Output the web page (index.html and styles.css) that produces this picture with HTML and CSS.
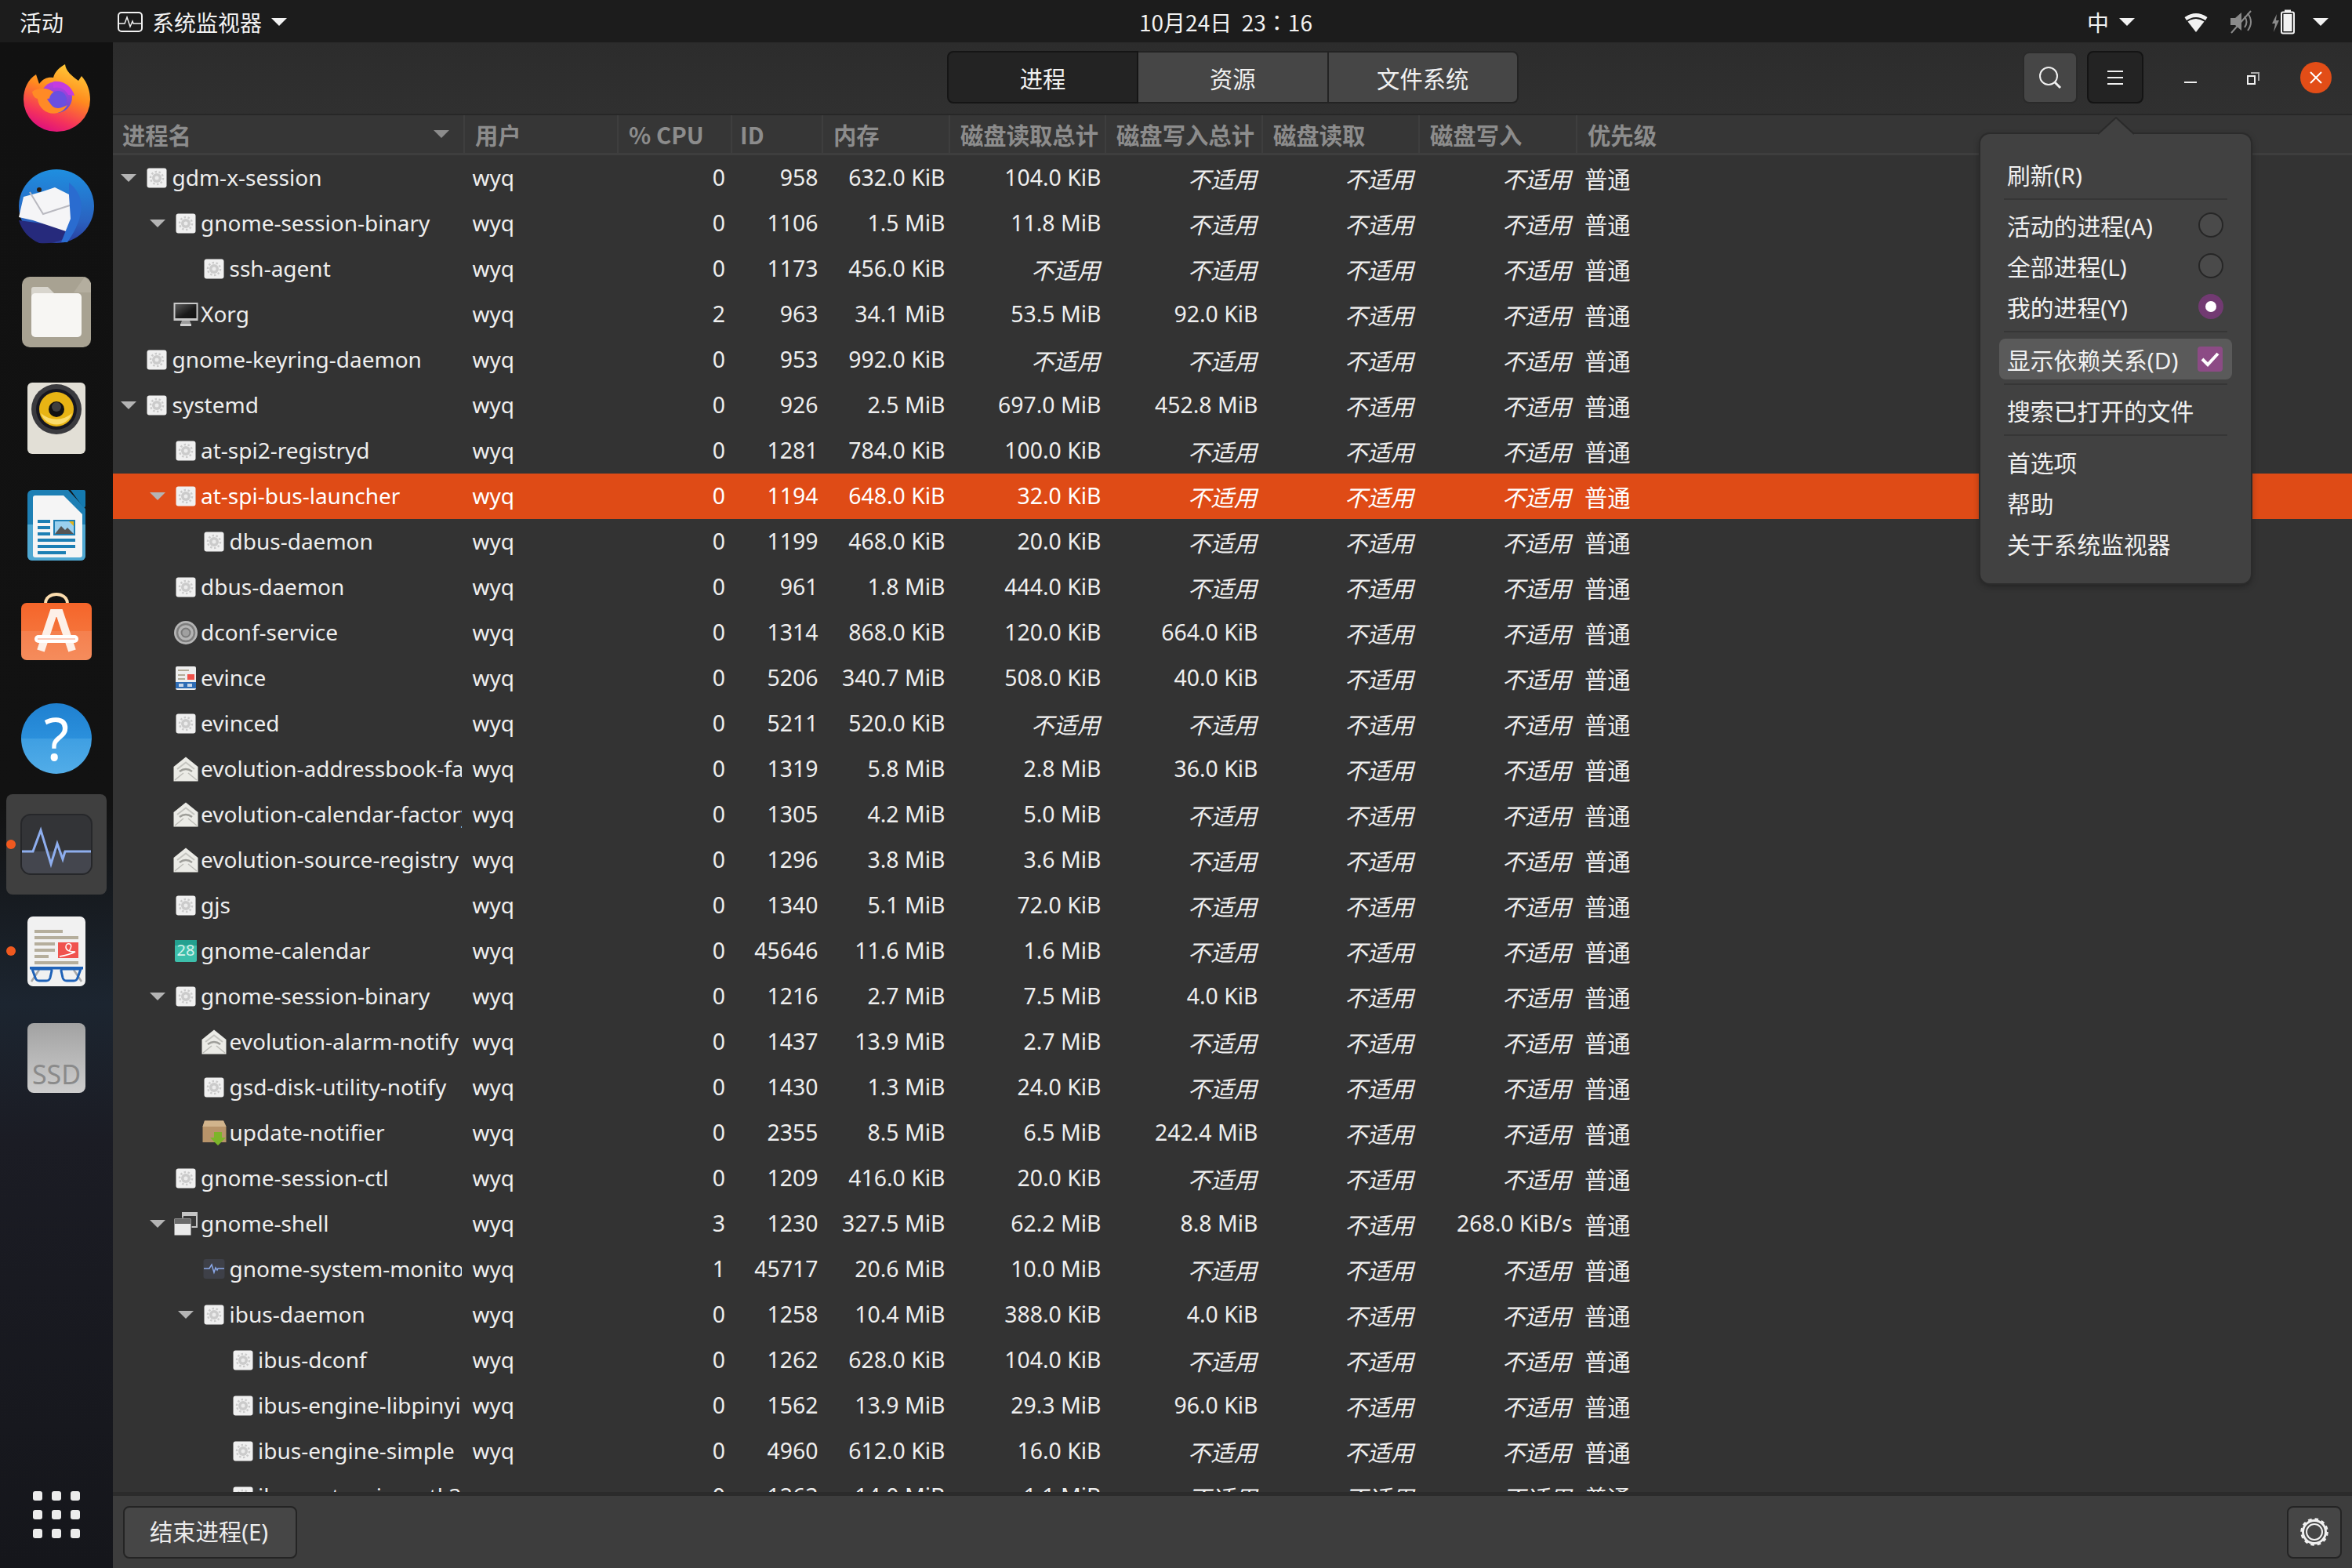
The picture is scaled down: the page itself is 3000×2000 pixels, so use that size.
FILE: index.html
```html
<!DOCTYPE html>
<html lang="zh-CN">
<head>
<meta charset="utf-8">
<title>系统监视器</title>
<link rel="stylesheet" href="styles.css">
</head>
<body>
<svg class="defs" width="0" height="0" aria-hidden="true">
  <defs>
    <linearGradient id="ffbody" x1="0.8" y1="0" x2="0.4" y2="1"><stop offset="0" stop-color="#ffd23a"/><stop offset="0.45" stop-color="#ff8a1e"/><stop offset="0.8" stop-color="#f5345a"/><stop offset="1" stop-color="#e0127c"/></linearGradient>
    <linearGradient id="ffcore" x1="0.5" y1="0" x2="0.5" y2="1"><stop offset="0" stop-color="#c13be0"/><stop offset="1" stop-color="#5a4fd0"/></linearGradient>
    <linearGradient id="tbbody" x1="0.5" y1="0" x2="0.5" y2="1"><stop offset="0" stop-color="#1f8fe0"/><stop offset="0.7" stop-color="#2a62c0"/><stop offset="1" stop-color="#2a3ea0"/></linearGradient>
    <linearGradient id="ssdg" x1="0" y1="0" x2="0" y2="1"><stop offset="0" stop-color="#a2a2a2"/><stop offset="1" stop-color="#cdcdcd"/></linearGradient>
    <linearGradient id="helpg" x1="0" y1="0" x2="0" y2="1"><stop offset="0" stop-color="#1f80d0"/><stop offset="0.5" stop-color="#2b90dc"/><stop offset="0.5" stop-color="#3f9fe2"/><stop offset="1" stop-color="#52ade8"/></linearGradient>
    <linearGradient id="softg" x1="0" y1="0" x2="0" y2="1"><stop offset="0" stop-color="#f5652a"/><stop offset="0.5" stop-color="#f5733a"/><stop offset="0.5" stop-color="#f5804e"/><stop offset="1" stop-color="#f58c5c"/></linearGradient>
    <linearGradient id="scr" x1="0" y1="0" x2="1" y2="1"><stop offset="0" stop-color="#5a5a5a"/><stop offset="0.6" stop-color="#1a1a1a"/><stop offset="1" stop-color="#111"/></linearGradient>
    <symbol id="gear" viewBox="-3.5 -3.5 32 32">
      <rect width="25" height="25" rx="3" fill="#f0f0f0"/>
      <circle cx="12.500" cy="12.500" r="6" fill="#cbcbcb"/>
      <circle cx="12.500" cy="12.500" r="8" fill="none" stroke="#cbcbcb" stroke-width="2.500" stroke-dasharray="2.500 2.500"/>
      <circle cx="12.500" cy="12.500" r="2.500" fill="#ececec"/>
    </symbol>
    <symbol id="mon" viewBox="0 0 32 32">
      <rect x="0.500" y="1" width="31" height="23" fill="#c9c9c9"/>
      <rect x="2.500" y="3" width="27" height="18" fill="url(#scr)"/>
      <path d="M11 24h10l2 5H9z" fill="#9c9c9c"/>
      <rect x="9" y="28" width="14" height="3" fill="#d0d0d0"/>
    </symbol>
    <symbol id="env" viewBox="0 0 32 32">
      <path d="M0.500 13 16 0.500 31.500 13v18.500h-31z" fill="#ebebe6"/>
      <path d="M5 16 16 7.500 27 16" fill="none" stroke="#c4c4bf" stroke-width="2"/>
      <path d="M8 19q8-6 16 0" fill="none" stroke="#9e9e99" stroke-width="2.500"/>
      <path d="M2 30 13 21M30 30 19 21" stroke="#bdbdb8" stroke-width="1.500"/>
    </symbol>
    <symbol id="cal" viewBox="-2 -2 32 32">
      <rect width="28" height="28" rx="2" fill="#3dbfab"/>
      <rect width="28" height="7" fill="#23a08f"/>
      <text x="14" y="20" class="caltext">28</text>
    </symbol>
    <symbol id="pkg" viewBox="0 0 32 32">
      <path d="M4 0.500h24L31.500 8v20h-30V8z" fill="#b8946a"/>
      <path d="M4 0.500h24L31.500 8h-30z" fill="#d1b48c"/>
      <path d="M16 15h10v7h5l-10 10-10-10h5z" fill="#7cb52a"/>
    </symbol>
    <symbol id="win" viewBox="0 0 32 32">
      <rect x="11" y="1" width="20" height="20" fill="#c5c5c5"/>
      <rect x="13" y="6" width="16" height="13" fill="#3a3a3a"/>
      <rect x="1" y="9" width="22" height="22" fill="#eaeaea" stroke="#333"/>
      <rect x="2" y="10" width="20" height="6" fill="#6a6a6a"/>
    </symbol>
    <symbol id="conf" viewBox="0 0 32 32">
      <circle cx="16" cy="16" r="15" fill="#b5b5b5"/>
      <circle cx="16" cy="16" r="11" fill="none" stroke="#7e7e7e" stroke-width="2.500"/>
      <circle cx="16" cy="16" r="5.500" fill="#a0a0a0" stroke="#7a7a7a" stroke-width="2"/>
    </symbol>
    <symbol id="doc" viewBox="-3 -1 32 32">
      <rect width="26" height="30" rx="2" fill="#eeeeee"/>
      <path d="M3 5h14M3 11h9M3 16h9" stroke="#b3ab98" stroke-width="2"/>
      <rect x="15" y="10" width="9" height="7" fill="#f0524a"/>
      <rect y="20" width="26" height="8" fill="#2d6cb5"/>
      <path d="M4 22h6v4H4zM15 22h6v4h-6z" fill="#c5d5e8"/>
    </symbol>
    <symbol id="sysm" viewBox="-2 -2 32 32">
      <rect x="0.500" y="1" width="27" height="25" rx="3" fill="#3e4048"/>
      <path d="M1 13h7l3-5 3 10 2-6 2 3 1-2h8" fill="none" stroke="#8aa8e8" stroke-width="1.500"/>
    </symbol>
  </defs>
</svg>

<div class="desk">
  <header class="panel">
    <span class="panel-txt activities">活动</span>
    <svg class="appglyph" viewBox="0 0 32 26"><rect x="1" y="1" width="30" height="24" rx="4" fill="none" stroke="#f2f2f2" stroke-width="2"/><path d="M1 15h8l3-8 4 12 3-7 1 3h11" fill="none" stroke="#f2f2f2" stroke-width="1.500"/></svg>
    <span class="panel-txt appname">系统监视器</span>
    <i class="caret app-caret"></i>
    <span class="panel-txt clock">10月24日&nbsp;&nbsp;23<span class="colon" lang="ja">：</span>16</span>
    <div class="tray">
      <span class="panel-txt ime">中</span>
      <i class="caret ime-caret"></i>
      <svg class="wifi" viewBox="0 0 30 26"><path d="M0.500 7Q15-3 29.500 7l-2.500 4Q15 3 3 11z" fill="#f2f2f2"/><path d="M4.500 12.500Q15 5.500 25.500 12.500L15 26z" fill="#f2f2f2"/></svg>
      <svg class="vol" viewBox="0 0 28 30"><path d="M0 10h6l8-7v23l-8-7H0z" fill="#8a8a8a"/><path d="M18 8q5 7 0 14M22 4q8 11 0 22" fill="none" stroke="#8a8a8a" stroke-width="2"/><path d="M1 29 26 1" stroke="#8a8a8a" stroke-width="2"/></svg>
      <svg class="bat" viewBox="0 0 30 32"><path d="M7 6 1 18h4l-2 11 7-15H6z" fill="#8a8a8a"/><rect x="13" y="3.500" width="16" height="27" rx="2" fill="none" stroke="#f2f2f2" stroke-width="2"/><rect x="17" y="0.500" width="8" height="3" fill="#f2f2f2"/><rect x="15.500" y="6" width="11" height="22" fill="#f2f2f2"/></svg>
      <i class="caret tray-caret"></i>
    </div>
  </header>

  <div class="main">
    <nav class="dock">
      <div class="slot">
        <svg viewBox="0 0 128 128"><path d="M22 66c0-14 6-26 16-32l4 12c5-7 11-9 18-8 2-8 8-13 15-17 1 9 9 15 17 21l4-6c8 9 11 20 11 30a42.500 41 0 0 1-85 0z" fill="url(#ffbody)"/><circle cx="64" cy="63" r="20" fill="url(#ffcore)"/><path d="M60 43c12-2 24 6 27 18l-8-1c-4-8-11-11-19-9z" fill="#c43be0"/><path d="M33 56c8-6 19-5 27 0 2 6-3 9-8 9 5 10 15 14 26 8-10 18-36 12-38-8-4-1-6-4-7-9z" fill="#ff8a26"/><circle cx="66" cy="66" r="11" fill="#6a4fe0"/></svg>
      </div>
      <div class="slot">
        <svg viewBox="0 0 128 128"><ellipse cx="64" cy="66" rx="48" ry="47" fill="url(#tbbody)"/><path d="M16 84c4 14 14 24 26 29 22 2 36-6 44-16L60 90z" fill="#262a7c"/><path d="M44 48 62 42 82 52v48l-48-16-18-4 6-26z" fill="#f5f5f7"/><path d="M30 48 47 76 81 65" fill="none" stroke="#b9b9c0" stroke-width="2"/><path d="M80 36c10 8 18 20 15 38-2 14-10 28-17 38l-8 0 12-30-2-30z" fill="#2a6cd0"/><circle cx="42" cy="45" r="3" fill="#2b1c10"/></svg>
      </div>
      <div class="slot">
        <svg viewBox="0 0 128 128"><rect x="20" y="20" width="88" height="90" rx="10" fill="#a8a292"/><path d="M100 20l-14 20h22V28z" fill="#b4ae9f"/><path d="M32 36a3 3 0 0 1 3-3h18l8 8v10H32z" fill="#d8d5cd"/><rect x="32" y="41" width="64" height="56" rx="5" fill="#f7f6f3"/></svg>
      </div>
      <div class="slot">
        <svg viewBox="0 0 128 128"><rect x="27" y="19" width="74" height="91" rx="6" fill="#e2dfd6"/><circle cx="64" cy="53" r="32" fill="#3a3a3e"/><circle cx="64" cy="53" r="26" fill="#17171f"/><circle cx="64" cy="53" r="22" fill="#e8b414"/><path d="M44 58a21 21 0 0 0 40 0 30 30 0 0 1-40 0z" fill="#fbdc6c"/><circle cx="64" cy="53" r="10" fill="#111"/><circle cx="64" cy="50" r="6" fill="#3e3e3e"/></svg>
      </div>
      <div class="slot">
        <svg viewBox="0 0 128 128"><path d="M33 20h46l22 24v60a6 6 0 0 1-6 6H33a6 6 0 0 1-6-6V26a6 6 0 0 1 6-6z" fill="#1d7fb4"/><path d="M27 64h74v40a6 6 0 0 1-6 6H33a6 6 0 0 1-6-6z" fill="#4fa8d2"/><path d="M82 20h17a2 2 0 0 1 2 2v18a2 2 0 0 1-3 2z" fill="#147ab0"/><path d="M37 27h36l24 24v52a3 3 0 0 1-3 3H37a3 3 0 0 1-3-3V30a3 3 0 0 1 3-3z" fill="#f5f5f5"/><path d="M40 58h16v4H40zM40 66h16v4H40zM40 74h16v4H40zM40 82h48v4H40zM40 90h48v4H40zM40 98h36v4H40z" fill="#1d7fb4"/><rect x="60" y="58" width="28" height="20" fill="#1d7fb4"/><rect x="62" y="60" width="24" height="16" fill="#9ad0ee"/><path d="M62 76l8-10 5 5 3-3 8 8z" fill="#555"/><path d="M80 60h6v6z" fill="#e6b416"/></svg>
      </div>
      <div class="slot">
        <svg viewBox="0 0 128 128"><path d="M50 29c0-16 28-16 28 0" fill="none" stroke="#fbdcae" stroke-width="4"/><rect x="19" y="28" width="90" height="73" rx="7" fill="url(#softg)"/><path d="M44 89 60 41h8l16 48" fill="none" stroke="#fdf0e8" stroke-width="10"/><rect x="36" y="69" width="56" height="10" rx="5" fill="#fff"/><rect x="40" y="73" width="48" height="2" fill="#fbcdbd"/></svg>
      </div>
      <div class="slot">
        <svg viewBox="0 0 128 128"><circle cx="64" cy="65" r="45" fill="url(#helpg)"/><text x="64" y="93" class="helptext">?</text></svg>
      </div>
      <div class="slot active">
        <i class="dot"></i>
        <svg viewBox="0 0 128 128"><rect x="19" y="26" width="90" height="76" rx="12" fill="#333437" stroke="#26272a" stroke-width="2"/><path d="M20 73h88v17a11 11 0 0 1-11 11H31a11 11 0 0 1-11-11z" fill="#44464e"/><path d="M20 73h14l10-27 13 43 8-26 7 20 3-10h33" fill="none" stroke="#8eaeee" stroke-width="3"/></svg>
      </div>
      <div class="slot">
        <i class="dot"></i>
        <svg viewBox="0 0 128 128"><rect x="27" y="20" width="74" height="89" rx="7" fill="#f1f1f1"/><path d="M36 37h36v4H36zM36 45h56v4H36zM36 53h26v4H36zM36 61h26v4H36zM36 69h18v4H36zM36 77h56v4H36z" fill="#b5ae9c"/><rect x="66" y="53" width="26" height="20" fill="#f0534e"/><path d="M68 71q12-2 20-6-12 0-12-6 0-5 5-4 4 2-1 9" fill="none" stroke="#fff" stroke-width="1.500"/><path d="M42 88 32 103M86 88l10 15" stroke="#a8a8a8" stroke-width="2.500"/><path d="M33 87h23q2 0 2 2l-2 9q-1 4-5 4H42q-4 0-5-4zM95 87H72q-2 0-2 2l2 9q1 4 5 4h9q4 0 5-4z" fill="none" stroke="#1f62b8" stroke-width="3"/><path d="M30 84h68v3.500H30z" fill="#1f62b8"/></svg>
      </div>
      <div class="slot">
        <svg viewBox="0 0 128 128"><rect x="27" y="20" width="74" height="89" rx="8" fill="url(#ssdg)"/><text x="64" y="98" class="ssdtext">SSD</text></svg>
      </div>
      <div class="grid9"><i></i><i></i><i></i><i></i><i></i><i></i><i></i><i></i><i></i></div>
    </nav>

    <section class="win">
      <div class="hdr">
        <div class="tabs">
          <button class="tab on">进程</button>
          <button class="tab">资源</button>
          <button class="tab">文件系统</button>
        </div>
        <div class="ctrls">
          <button class="hbtn search"><svg viewBox="0 0 32 32"><circle cx="14" cy="14" r="11" fill="none" stroke="#f0f0f0" stroke-width="2"/><path d="M22 22l7 7" stroke="#f0f0f0" stroke-width="3"/></svg></button>
          <button class="hbtn burger"><svg viewBox="0 0 20 20"><path d="M0 2h20M0 10h20M0 18h20" stroke="#f0f0f0" stroke-width="2"/></svg></button>
          <svg class="wmin" viewBox="0 0 16 2"><rect width="16" height="2" fill="#f0f0f0"/></svg>
          <svg class="wmax" viewBox="0 0 16 16"><path d="M5 0h11v11h-2V2H5z" fill="#a8a8a8"/><rect x="1" y="5" width="9" height="10" fill="none" stroke="#f0f0f0" stroke-width="2"/></svg>
          <div class="wclose"><svg viewBox="0 0 16 16"><path d="M1 1l14 14M15 1 1 15" stroke="#fff" stroke-width="2"/></svg></div>
        </div>
      </div>

      <div class="cols">
        <div class="col first">进程名<i class="sort"></i></div>
        <div class="col">用户</div>
        <div class="col">% CPU</div>
        <div class="col col-id">ID</div>
        <div class="col">内存</div>
        <div class="col">磁盘读取总计</div>
        <div class="col">磁盘写入总计</div>
        <div class="col">磁盘读取</div>
        <div class="col">磁盘写入</div>
        <div class="col">优先级</div>
      </div>

      <div class="rows">
        <div class="row"><div class="name l0"><i class="tw o"></i><svg class="ic"><use href="#gear"/></svg><span class="nm">gdm-x-session</span></div><div class="usr">wyq</div><div class="num">0</div><div class="num">958</div><div class="num">632.0 KiB</div><div class="num">104.0 KiB</div><div class="na">不适用</div><div class="na">不适用</div><div class="na">不适用</div><div class="pri">普通</div></div>
        <div class="row"><div class="name l1"><i class="tw o"></i><svg class="ic"><use href="#gear"/></svg><span class="nm">gnome-session-binary</span></div><div class="usr">wyq</div><div class="num">0</div><div class="num">1106</div><div class="num">1.5 MiB</div><div class="num">11.8 MiB</div><div class="na">不适用</div><div class="na">不适用</div><div class="na">不适用</div><div class="pri">普通</div></div>
        <div class="row"><div class="name l2"><i class="tw"></i><svg class="ic"><use href="#gear"/></svg><span class="nm">ssh-agent</span></div><div class="usr">wyq</div><div class="num">0</div><div class="num">1173</div><div class="num">456.0 KiB</div><div class="na">不适用</div><div class="na">不适用</div><div class="na">不适用</div><div class="na">不适用</div><div class="pri">普通</div></div>
        <div class="row"><div class="name l1"><i class="tw"></i><svg class="ic"><use href="#mon"/></svg><span class="nm">Xorg</span></div><div class="usr">wyq</div><div class="num">2</div><div class="num">963</div><div class="num">34.1 MiB</div><div class="num">53.5 MiB</div><div class="num">92.0 KiB</div><div class="na">不适用</div><div class="na">不适用</div><div class="pri">普通</div></div>
        <div class="row"><div class="name l0"><i class="tw"></i><svg class="ic"><use href="#gear"/></svg><span class="nm">gnome-keyring-daemon</span></div><div class="usr">wyq</div><div class="num">0</div><div class="num">953</div><div class="num">992.0 KiB</div><div class="na">不适用</div><div class="na">不适用</div><div class="na">不适用</div><div class="na">不适用</div><div class="pri">普通</div></div>
        <div class="row"><div class="name l0"><i class="tw o"></i><svg class="ic"><use href="#gear"/></svg><span class="nm">systemd</span></div><div class="usr">wyq</div><div class="num">0</div><div class="num">926</div><div class="num">2.5 MiB</div><div class="num">697.0 MiB</div><div class="num">452.8 MiB</div><div class="na">不适用</div><div class="na">不适用</div><div class="pri">普通</div></div>
        <div class="row"><div class="name l1"><i class="tw"></i><svg class="ic"><use href="#gear"/></svg><span class="nm">at-spi2-registryd</span></div><div class="usr">wyq</div><div class="num">0</div><div class="num">1281</div><div class="num">784.0 KiB</div><div class="num">100.0 KiB</div><div class="na">不适用</div><div class="na">不适用</div><div class="na">不适用</div><div class="pri">普通</div></div>
        <div class="row sel"><div class="name l1"><i class="tw o"></i><svg class="ic"><use href="#gear"/></svg><span class="nm">at-spi-bus-launcher</span></div><div class="usr">wyq</div><div class="num">0</div><div class="num">1194</div><div class="num">648.0 KiB</div><div class="num">32.0 KiB</div><div class="na">不适用</div><div class="na">不适用</div><div class="na">不适用</div><div class="pri">普通</div></div>
        <div class="row"><div class="name l2"><i class="tw"></i><svg class="ic"><use href="#gear"/></svg><span class="nm">dbus-daemon</span></div><div class="usr">wyq</div><div class="num">0</div><div class="num">1199</div><div class="num">468.0 KiB</div><div class="num">20.0 KiB</div><div class="na">不适用</div><div class="na">不适用</div><div class="na">不适用</div><div class="pri">普通</div></div>
        <div class="row"><div class="name l1"><i class="tw"></i><svg class="ic"><use href="#gear"/></svg><span class="nm">dbus-daemon</span></div><div class="usr">wyq</div><div class="num">0</div><div class="num">961</div><div class="num">1.8 MiB</div><div class="num">444.0 KiB</div><div class="na">不适用</div><div class="na">不适用</div><div class="na">不适用</div><div class="pri">普通</div></div>
        <div class="row"><div class="name l1"><i class="tw"></i><svg class="ic"><use href="#conf"/></svg><span class="nm">dconf-service</span></div><div class="usr">wyq</div><div class="num">0</div><div class="num">1314</div><div class="num">868.0 KiB</div><div class="num">120.0 KiB</div><div class="num">664.0 KiB</div><div class="na">不适用</div><div class="na">不适用</div><div class="pri">普通</div></div>
        <div class="row"><div class="name l1"><i class="tw"></i><svg class="ic"><use href="#doc"/></svg><span class="nm">evince</span></div><div class="usr">wyq</div><div class="num">0</div><div class="num">5206</div><div class="num">340.7 MiB</div><div class="num">508.0 KiB</div><div class="num">40.0 KiB</div><div class="na">不适用</div><div class="na">不适用</div><div class="pri">普通</div></div>
        <div class="row"><div class="name l1"><i class="tw"></i><svg class="ic"><use href="#gear"/></svg><span class="nm">evinced</span></div><div class="usr">wyq</div><div class="num">0</div><div class="num">5211</div><div class="num">520.0 KiB</div><div class="na">不适用</div><div class="na">不适用</div><div class="na">不适用</div><div class="na">不适用</div><div class="pri">普通</div></div>
        <div class="row"><div class="name l1"><i class="tw"></i><svg class="ic"><use href="#env"/></svg><span class="nm">evolution-addressbook-factory</span></div><div class="usr">wyq</div><div class="num">0</div><div class="num">1319</div><div class="num">5.8 MiB</div><div class="num">2.8 MiB</div><div class="num">36.0 KiB</div><div class="na">不适用</div><div class="na">不适用</div><div class="pri">普通</div></div>
        <div class="row"><div class="name l1"><i class="tw"></i><svg class="ic"><use href="#env"/></svg><span class="nm">evolution-calendar-factory</span></div><div class="usr">wyq</div><div class="num">0</div><div class="num">1305</div><div class="num">4.2 MiB</div><div class="num">5.0 MiB</div><div class="na">不适用</div><div class="na">不适用</div><div class="na">不适用</div><div class="pri">普通</div></div>
        <div class="row"><div class="name l1"><i class="tw"></i><svg class="ic"><use href="#env"/></svg><span class="nm">evolution-source-registry</span></div><div class="usr">wyq</div><div class="num">0</div><div class="num">1296</div><div class="num">3.8 MiB</div><div class="num">3.6 MiB</div><div class="na">不适用</div><div class="na">不适用</div><div class="na">不适用</div><div class="pri">普通</div></div>
        <div class="row"><div class="name l1"><i class="tw"></i><svg class="ic"><use href="#gear"/></svg><span class="nm">gjs</span></div><div class="usr">wyq</div><div class="num">0</div><div class="num">1340</div><div class="num">5.1 MiB</div><div class="num">72.0 KiB</div><div class="na">不适用</div><div class="na">不适用</div><div class="na">不适用</div><div class="pri">普通</div></div>
        <div class="row"><div class="name l1"><i class="tw"></i><svg class="ic"><use href="#cal"/></svg><span class="nm">gnome-calendar</span></div><div class="usr">wyq</div><div class="num">0</div><div class="num">45646</div><div class="num">11.6 MiB</div><div class="num">1.6 MiB</div><div class="na">不适用</div><div class="na">不适用</div><div class="na">不适用</div><div class="pri">普通</div></div>
        <div class="row"><div class="name l1"><i class="tw o"></i><svg class="ic"><use href="#gear"/></svg><span class="nm">gnome-session-binary</span></div><div class="usr">wyq</div><div class="num">0</div><div class="num">1216</div><div class="num">2.7 MiB</div><div class="num">7.5 MiB</div><div class="num">4.0 KiB</div><div class="na">不适用</div><div class="na">不适用</div><div class="pri">普通</div></div>
        <div class="row"><div class="name l2"><i class="tw"></i><svg class="ic"><use href="#env"/></svg><span class="nm">evolution-alarm-notify</span></div><div class="usr">wyq</div><div class="num">0</div><div class="num">1437</div><div class="num">13.9 MiB</div><div class="num">2.7 MiB</div><div class="na">不适用</div><div class="na">不适用</div><div class="na">不适用</div><div class="pri">普通</div></div>
        <div class="row"><div class="name l2"><i class="tw"></i><svg class="ic"><use href="#gear"/></svg><span class="nm">gsd-disk-utility-notify</span></div><div class="usr">wyq</div><div class="num">0</div><div class="num">1430</div><div class="num">1.3 MiB</div><div class="num">24.0 KiB</div><div class="na">不适用</div><div class="na">不适用</div><div class="na">不适用</div><div class="pri">普通</div></div>
        <div class="row"><div class="name l2"><i class="tw"></i><svg class="ic"><use href="#pkg"/></svg><span class="nm">update-notifier</span></div><div class="usr">wyq</div><div class="num">0</div><div class="num">2355</div><div class="num">8.5 MiB</div><div class="num">6.5 MiB</div><div class="num">242.4 MiB</div><div class="na">不适用</div><div class="na">不适用</div><div class="pri">普通</div></div>
        <div class="row"><div class="name l1"><i class="tw"></i><svg class="ic"><use href="#gear"/></svg><span class="nm">gnome-session-ctl</span></div><div class="usr">wyq</div><div class="num">0</div><div class="num">1209</div><div class="num">416.0 KiB</div><div class="num">20.0 KiB</div><div class="na">不适用</div><div class="na">不适用</div><div class="na">不适用</div><div class="pri">普通</div></div>
        <div class="row"><div class="name l1"><i class="tw o"></i><svg class="ic"><use href="#win"/></svg><span class="nm">gnome-shell</span></div><div class="usr">wyq</div><div class="num">3</div><div class="num">1230</div><div class="num">327.5 MiB</div><div class="num">62.2 MiB</div><div class="num">8.8 MiB</div><div class="na">不适用</div><div class="num">268.0 KiB/s</div><div class="pri">普通</div></div>
        <div class="row"><div class="name l2"><i class="tw"></i><svg class="ic"><use href="#sysm"/></svg><span class="nm">gnome-system-monitor</span></div><div class="usr">wyq</div><div class="num">1</div><div class="num">45717</div><div class="num">20.6 MiB</div><div class="num">10.0 MiB</div><div class="na">不适用</div><div class="na">不适用</div><div class="na">不适用</div><div class="pri">普通</div></div>
        <div class="row"><div class="name l2"><i class="tw o"></i><svg class="ic"><use href="#gear"/></svg><span class="nm">ibus-daemon</span></div><div class="usr">wyq</div><div class="num">0</div><div class="num">1258</div><div class="num">10.4 MiB</div><div class="num">388.0 KiB</div><div class="num">4.0 KiB</div><div class="na">不适用</div><div class="na">不适用</div><div class="pri">普通</div></div>
        <div class="row"><div class="name l3"><i class="tw"></i><svg class="ic"><use href="#gear"/></svg><span class="nm">ibus-dconf</span></div><div class="usr">wyq</div><div class="num">0</div><div class="num">1262</div><div class="num">628.0 KiB</div><div class="num">104.0 KiB</div><div class="na">不适用</div><div class="na">不适用</div><div class="na">不适用</div><div class="pri">普通</div></div>
        <div class="row"><div class="name l3"><i class="tw"></i><svg class="ic"><use href="#gear"/></svg><span class="nm">ibus-engine-libpinyin</span></div><div class="usr">wyq</div><div class="num">0</div><div class="num">1562</div><div class="num">13.9 MiB</div><div class="num">29.3 MiB</div><div class="num">96.0 KiB</div><div class="na">不适用</div><div class="na">不适用</div><div class="pri">普通</div></div>
        <div class="row"><div class="name l3"><i class="tw"></i><svg class="ic"><use href="#gear"/></svg><span class="nm">ibus-engine-simple</span></div><div class="usr">wyq</div><div class="num">0</div><div class="num">4960</div><div class="num">612.0 KiB</div><div class="num">16.0 KiB</div><div class="na">不适用</div><div class="na">不适用</div><div class="na">不适用</div><div class="pri">普通</div></div>
        <div class="row"><div class="name l3"><i class="tw"></i><svg class="ic"><use href="#gear"/></svg><span class="nm">ibus-extension-gtk3</span></div><div class="usr">wyq</div><div class="num">0</div><div class="num">1263</div><div class="num">14.0 MiB</div><div class="num">1.1 MiB</div><div class="na">不适用</div><div class="na">不适用</div><div class="na">不适用</div><div class="pri">普通</div></div>
      </div>

      <div class="foot">
        <button class="endbtn">结束进程(E)</button>
        <button class="gearbtn"><svg viewBox="0 0 36 36"><circle cx="18" cy="18" r="14.500" fill="none" stroke="#f0f0f0" stroke-width="3"/><circle cx="18" cy="18" r="16" fill="none" stroke="#f0f0f0" stroke-width="3.500" stroke-dasharray="4.500 3.880"/><circle cx="18" cy="18" r="10" fill="none" stroke="#f0f0f0" stroke-width="2"/></svg></button>
      </div>

      <div class="pop">
        <svg class="pop-tip" viewBox="0 0 46 24"><path d="M0 23 23 1l23 22z" fill="#414141"/><path d="M0 22 23 1l23 21" fill="none" stroke="#2a2a2a" stroke-width="2"/></svg>
        <div class="mi">刷新(R)</div>
        <div class="sep"></div>
        <div class="mi">活动的进程(A)<i class="radio"></i></div>
        <div class="mi">全部进程(L)<i class="radio"></i></div>
        <div class="mi">我的进程(Y)<i class="radio on"></i></div>
        <div class="sep sep-wide"></div>
        <div class="mi hov">显示依赖关系(D)<svg class="check" viewBox="0 0 32 32"><rect width="32" height="32" rx="4" fill="#8c4b85"/><path d="M6 16l7 7L26 9" fill="none" stroke="#fff" stroke-width="4"/></svg></div>
        <div class="sep"></div>
        <div class="mi">搜索已打开的文件</div>
        <div class="sep"></div>
        <div class="mi first-low">首选项</div>
        <div class="mi">帮助</div>
        <div class="mi">关于系统监视器</div>
      </div>
    </section>
  </div>
</div>
</body>
</html>
```
FILE: styles.css
```css
* { box-sizing: border-box; }
html, body { margin: 0; padding: 0; }
body {
  width: 3000px;
  height: 2000px;
  overflow: hidden;
  background: #333;
  color: #eeeeee;
  font-family: "Noto Sans", "Noto Sans CJK SC", sans-serif;
}
.defs { position: absolute; }
i { display: block; font-style: normal; }
button { font: inherit; color: inherit; padding: 0; }
svg { display: block; }

.desk { display: flex; flex-direction: column; height: 2000px; }

/* top panel */
.panel {
  height: 54px;
  flex: none;
  display: flex;
  align-items: center;
  background: #1c1c1c;
  padding-left: 25px;
  padding-top: 2px;
}
.panel-txt { font-size: 28px; color: #f2f2f2; font-family: "Noto Sans CJK SC", sans-serif; white-space: nowrap; }
.appglyph { width: 32px; height: 26px; margin-left: 69px; }
.appname { margin-left: 12px; }
.caret { width: 0; height: 0; border-left: 10px solid transparent; border-right: 10px solid transparent; border-top: 10px solid #f2f2f2; margin-left: 11px; }
.app-caret { margin-left: 12px; }
.clock { margin-left: 1087px; }
.colon { font-family: "Noto Sans CJK JP", sans-serif; }
.tray { margin-left: auto; display: flex; align-items: center; padding-right: 30px; }
.ime-caret { margin-left: 13px; }
.wifi { width: 30px; height: 26px; margin-left: 63px; }
.vol { width: 28px; height: 30px; margin-left: 29px; }
.bat { width: 30px; height: 32px; margin-left: 24px; }
.tray-caret { margin-left: 23px; }

/* main */
.main { flex: 1; display: flex; min-height: 0; }
.dock {
  width: 144px;
  flex: none;
  display: flex;
  flex-direction: column;
  gap: 8px;
  padding: 7px 8px 38px;
  background: linear-gradient(180deg, #111111 0%, #121212 50%, #1c2530 63%, #1b1c24 72%, #15161b 100%);
}
.slot { position: relative; width: 128px; height: 128px; flex: none; border-radius: 8px; }
.slot svg { width: 128px; height: 128px; }
.slot.active { background: #3f3f3f; }
.dot { position: absolute; left: 0; top: 58px; width: 12px; height: 12px; border-radius: 50%; background: #f0591f; }
.grid9 {
  margin-top: auto;
  align-self: center;
  display: grid;
  grid-template-columns: repeat(3, 12px);
  grid-auto-rows: 12px;
  column-gap: 12px;
  row-gap: 12px;
}
.grid9 i { background: #ececec; border-radius: 3px; }

.win { position: relative; flex: 1; min-width: 0; display: flex; flex-direction: column; background: #333333; }

/* header bar */
.hdr {
  height: 93px;
  flex: none;
  display: flex;
  align-items: center;
  padding-left: 1064px;
  padding-bottom: 2px;
  background: linear-gradient(180deg, #2c2c2c, #303030);
  border-bottom: 2px solid #272727;
}
.tabs { display: flex; width: 729px; height: 67px; }
.tab {
  flex: 1;
  background: #464646;
  border: 2px solid #232323;
  border-left-width: 0;
  font-size: 29.33px;
  font-family: "Noto Sans CJK SC", sans-serif;
  color: #f0f0f0;
}
.tab:last-child { border-radius: 0 8px 8px 0; }
.tab.on { flex: none; width: 244px; background: #232323; border-color: #151515; border-left-width: 2px; border-radius: 8px 0 0 8px; }
.ctrls { margin-left: auto; display: flex; align-items: center; padding-right: 26px; }
.hbtn { display: flex; align-items: center; justify-content: center; border-radius: 8px; }
.search { width: 70px; height: 66px; background: #464646; border: 2px solid #2a2a2a; }
.search svg { width: 32px; height: 32px; }
.burger { width: 72px; height: 67px; background: #232323; border: 2px solid #141414; margin-left: 12px; }
.burger svg { width: 20px; height: 20px; }
.wmin { width: 16px; height: 2px; margin-left: 52px; margin-top: 12px; }
.wmax { width: 16px; height: 16px; margin-left: 64px; margin-top: 2px; }
.wclose { width: 40px; height: 40px; margin-left: 52px; border-radius: 50%; background: #e24d17; display: flex; align-items: center; justify-content: center; }
.wclose svg { width: 16px; height: 16px; }

/* columns */
.cols, .row {
  display: grid;
  grid-template-columns: 449px 196px 145px 116px 162px 199px 200px 200px 201px 1fr;
}
.cols {
  height: 51px;
  flex: none;
  background: #363636;
  border-bottom: 3px solid #3e3e3e;
}
.col {
  display: flex;
  align-items: center;
  padding-left: 13px;
  border-right: 2px solid #3e3e3e;
  font-size: 29.33px;
  font-weight: 700;
  color: #8c8c8c;
  font-family: "Noto Sans CJK SC", sans-serif;
  white-space: nowrap;
  overflow: hidden;
}
.col:last-child { border-right: 0; }
.col.first { padding-left: 12px; }
.col-id { padding-left: 10px; }
.sort { margin-left: auto; margin-right: 18px; width: 0; height: 0; border-left: 10px solid transparent; border-right: 10px solid transparent; border-top: 10px solid #8c8c8c; }

/* rows */
.rows { flex: 1; min-height: 0; overflow: hidden; }
.row { height: 58px; align-items: center; }
.row.sel { background: #df4b16; color: #fff; }
.name { display: flex; align-items: center; padding-right: 4px; min-width: 0; overflow: hidden; }
.l0 { padding-left: 10px; }
.l1 { padding-left: 46.5px; }
.l2 { padding-left: 83px; }
.l3 { padding-left: 119.5px; }
.tw { width: 30px; flex: none; height: 10px; }
.tw.o { width: 0; height: 0; margin-right: 10px; border-left: 10px solid transparent; border-right: 10px solid transparent; border-top: 10px solid #b4b4b4; }
.ic { width: 32px; height: 32px; flex: none; }
.nm { margin-left: 3.5px; padding-bottom: 3px; min-width: 0; flex: 1; overflow: hidden; white-space: nowrap; font-size: 28px; }
.usr { padding: 0 0 3px 9.5px; font-size: 28px; }
.num { text-align: right; padding: 0 6.5px 2px 0; font-size: 28.4px; white-space: nowrap; }
.row .num:nth-child(3) { padding-right: 9px; }
.na { text-align: right; padding-right: 8px; font-size: 29.33px; font-style: italic; font-family: "Noto Sans CJK SC", sans-serif; }
.pri { padding-left: 9px; font-size: 29.33px; font-family: "Noto Sans CJK SC", sans-serif; }

/* footer */
.foot {
  height: 97px;
  flex: none;
  display: flex;
  align-items: center;
  justify-content: space-between;
  padding: 0 13px;
  background: #3d3d3d;
  border-top: 5px solid #2b2b2b;
}
.endbtn {
  width: 222px;
  height: 67px;
  padding: 0 3px 3px 0;
  background: #464646;
  border: 2px solid #242424;
  border-radius: 8px;
  font-size: 29.33px;
  color: #ececec;
  font-family: "Noto Sans", "Noto Sans CJK SC", sans-serif;
}
.gearbtn { width: 70px; height: 67px; background: #464646; border: 2px solid #242424; border-radius: 8px; display: flex; align-items: center; justify-content: center; }
.gearbtn svg { width: 36px; height: 36px; }

/* popover */
.pop {
  position: absolute;
  left: 2382px;
  top: 117px;
  width: 345px;
  height: 573px;
  padding-top: 25px;
  background: #414141;
  border-radius: 12px;
  box-shadow: 0 0 0 2px #2b2b2b, 0 3px 10px rgba(0, 0, 0, 0.4);
  display: flex;
  flex-direction: column;
  font-size: 29.8px;
  color: #f0f0f0;
}
.pop-tip { position: absolute; left: 150px; top: -22px; width: 46px; height: 24px; }
.mi { height: 52px; flex: none; margin: 0 24px; padding: 0 12px 0 10px; display: flex; align-items: center; justify-content: space-between; border-radius: 8px; white-space: nowrap; }
.first-low { margin-top: 1px; }
.mi.hov { background: #5a5a5a; }
.sep { height: 2px; flex: none; margin: 5px 30px 6px; background: #363636; }
.sep-wide { margin-bottom: 8px; }
.radio { width: 32px; height: 32px; border-radius: 50%; background: #4a4a4a; border: 2px solid #262626; margin-right: -1px; position: relative; }
.radio.on { background: #723a72; border-color: #723a72; }
.radio.on::after { content: ""; position: absolute; left: 7px; top: 7px; width: 14px; height: 14px; border-radius: 50%; background: #fff; }
.check { width: 32px; height: 32px; }

/* svg text */
.caltext { font: 20px "Noto Sans", sans-serif; fill: #d5f0ea; text-anchor: middle; }
.helptext { font: 74px "Noto Sans", sans-serif; fill: #fff; text-anchor: middle; }
.ssdtext { font: 34px "Noto Sans", sans-serif; fill: #8a8a8a; text-anchor: middle; }
```
